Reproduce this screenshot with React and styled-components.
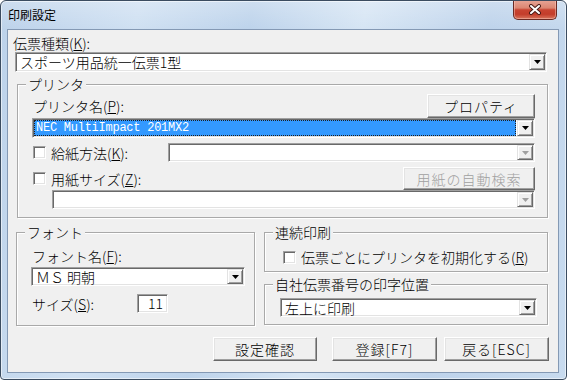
import React from 'react';
import styled, { createGlobalStyle } from 'styled-components';

const GlobalStyle = createGlobalStyle`
  html, body {
    margin: 0;
    padding: 0;
    background: #fff;
  }
  body {
    font-family: "Noto Sans CJK JP", "Noto Sans", sans-serif;
    font-weight: 300;
    color: #000;
  }
  * {
    box-sizing: border-box;
  }
`;

function ArrowIcon({ disabled }) {
  return (
    <svg width="7" height="4" viewBox="0 0 7 4">
      <polygon points="0,0 7,0 3.5,4" fill={disabled ? '#a0a0a0' : '#000'} />
    </svg>
  );
}

function CloseIcon() {
  return (
    <svg width="14" height="11" viewBox="0 0 14 11">
      <path d="M3 2 L11 9 M11 2 L3 9" stroke="#4a1c18" strokeWidth="4" strokeLinecap="round" />
      <path d="M3 2 L11 9 M11 2 L3 9" stroke="#fff" strokeWidth="2" strokeLinecap="round" />
    </svg>
  );
}

function Combo({ w, h, value, disabled, selected, mono, ml }) {
  return (
    <Field $w={w} $h={h} $ml={ml}>
      <Value $selected={selected} $mono={mono}>{value}</Value>
      <DropButton>
        <ArrowIcon disabled={disabled} />
      </DropButton>
    </Field>
  );
}

function Mn({ k }) {
  return <>(<u>{k}</u>):</>;
}

export default function App() {
  return (
    <>
      <GlobalStyle />
      <Window>
        <TitleBar>
          <Title>印刷設定</Title>
          <CloseButton><CloseIcon /></CloseButton>
        </TitleBar>
        <Client>
          <TopLabel>伝票種類<Mn k="K" /></TopLabel>
          <Combo w={532} h={20} ml={7} value="スポーツ用品統一伝票1型" />

          <PrinterGroup>
            <Legend>プリンタ</Legend>
            <Row $h={24}>
              <Label>プリンタ名<Mn k="P" /></Label>
              <Button $w={108} $h={24}>プロパティ</Button>
            </Row>
            <Combo w={503} h={20} selected mono value="NEC MultiImpact 201MX2" />
            <Row $mt={5}>
              <CheckItem>
                <Check />
                <Label>給紙方法<Mn k="K" /></Label>
              </CheckItem>
              <Combo w={367} h={19} disabled value="" />
            </Row>
            <Row $mt={5}>
              <CheckItem>
                <Check />
                <Label>用紙サイズ<Mn k="Z" /></Label>
              </CheckItem>
              <Button $w={132} $h={23} disabled>用紙の自動検索</Button>
            </Row>
            <Combo w={483} h={19} ml={20} disabled value="" />
          </PrinterGroup>

          <BottomRow>
            <FontGroup>
              <Legend>フォント</Legend>
              <Label>フォント名<Mn k="F" /></Label>
              <ComboGap>
                <Combo w={214} h={19} value="ＭＳ 明朝" />
              </ComboGap>
              <SizeRow>
                <SizeLabel>サイズ<Mn k="S" /></SizeLabel>
                <SizeInput>11</SizeInput>
              </SizeRow>
            </FontGroup>
            <RightColumn>
              <ContinuousGroup>
                <Legend>連続印刷</Legend>
                <CheckItem>
                  <Check />
                  <Label>伝票ごとにプリンタを初期化する(<u>R</u>)</Label>
                </CheckItem>
              </ContinuousGroup>
              <PositionGroup>
                <Legend>自社伝票番号の印字位置</Legend>
                <Combo w={257} h={19} value="左上に印刷" />
              </PositionGroup>
            </RightColumn>
          </BottomRow>

          <ButtonBar>
            <Button $w={104} $h={24} $mr={15}>設定確認</Button>
            <Button $w={105} $h={24} $mr={7}>登録[F7]</Button>
            <Button $w={105} $h={24}>戻る[ESC]</Button>
          </ButtonBar>
        </Client>
      </Window>
    </>
  );
}

const Window = styled.div`
  width: 567px;
  height: 380px;
  display: flex;
  flex-direction: column;
  border: 1px solid #3b4c60;
  border-radius: 6px 6px 4px 4px;
  overflow: hidden;
  background:
    linear-gradient(180deg, rgba(255, 255, 255, 0.25) 0%, rgba(255, 255, 255, 0) 28px),
    linear-gradient(100deg, #bcd2ea 0%, #cfe0f2 22%, #bdd3eb 40%, #d6e5f4 58%, #bed3eb 78%, #c8dbef 100%);
  box-shadow: inset 0 0 0 1px rgba(255, 255, 255, 0.55);
`;

const TitleBar = styled.div`
  height: 28px;
  display: flex;
  align-items: flex-start;
  justify-content: space-between;
  padding-left: 7px;
`;

const Title = styled.div`
  font-size: 12px;
  line-height: 16px;
  margin-top: 6px;
  font-weight: 400;
`;

const CloseButton = styled.div`
  width: 44px;
  height: 20px;
  margin-top: -1px;
  margin-right: 9px;
  display: flex;
  align-items: center;
  justify-content: center;
  border: 1px solid #6a2a24;
  border-top: none;
  border-radius: 0 0 5px 5px;
  background: linear-gradient(180deg, #e7a697 0%, #db8672 42%, #c84431 52%, #c33d2b 75%, #d8745d 100%);
  box-shadow: inset 0 0 0 1px rgba(255, 210, 200, 0.45);
`;

const Client = styled.div`
  flex: 1;
  margin: 0 7px 6px 6px;
  background: #f0f0f0;
  border: 1px solid #8499b4;
  display: flex;
  flex-direction: column;
`;

const TopLabel = styled.div`
  margin: 5px 0 1px 5px;
  height: 16px;
  font-size: 14px;
  line-height: 16px;
`;

const Field = styled.div`
  width: ${p => p.$w}px;
  height: ${p => p.$h}px;
  margin-left: ${p => p.$ml || 0}px;
  flex-shrink: 0;
  display: flex;
  padding: 1px;
  background: #fff;
  border-style: solid;
  border-width: 1px;
  border-color: #a0a0a0 #fff #fff #a0a0a0;
  box-shadow: inset 1px 1px 0 #696969, inset -1px -1px 0 #e3e3e3;
`;

const Value = styled.div`
  flex: 1;
  display: flex;
  align-items: center;
  margin-right: ${p => (p.$selected ? 1 : 0)}px;
  padding-left: ${p => (p.$selected ? 1 : 2)}px;
  font-size: ${p => (p.$mono ? 12 : 14)}px;
  line-height: 14px;
  font-family: ${p => (p.$mono ? '"Liberation Mono", monospace' : 'inherit')};
  font-weight: ${p => (p.$mono ? 400 : 300)};
  letter-spacing: ${p => (p.$mono ? '-0.25px' : '0')};
  color: ${p => (p.$selected ? '#fff' : '#000')};
  background: ${p => (p.$selected ? '#3399ff' : 'transparent')};
  border: 1px ${p => (p.$selected ? 'dotted #1e1e1e' : 'solid transparent')};
  white-space: nowrap;
`;

const DropButton = styled.div`
  width: 16px;
  display: flex;
  align-items: center;
  justify-content: center;
  background: #f0f0f0;
  border-style: solid;
  border-width: 1px;
  border-color: #e3e3e3 #696969 #696969 #e3e3e3;
  box-shadow: inset 1px 1px 0 #fff, inset -1px -1px 0 #a0a0a0;
`;

const Group = styled.div`
  position: relative;
  border: 1px solid #a9a9a9;
  box-shadow: inset 1px 1px 0 #fff, 1px 1px 0 #fff;
`;

const PrinterGroup = styled(Group)`
  width: 531px;
  height: 134px;
  margin: 12px 0 0 9px;
  padding: 9px 12px 0 14px;
  display: flex;
  flex-direction: column;
`;

const Legend = styled.div`
  position: absolute;
  top: -9px;
  left: 8px;
  padding: 0 2px;
  background: #f0f0f0;
  font-size: 14px;
  line-height: 16px;
`;

const Row = styled.div`
  display: flex;
  align-items: center;
  justify-content: space-between;
  height: ${p => (p.$h ? `${p.$h}px` : 'auto')};
  margin-top: ${p => p.$mt || 0}px;
`;

const Label = styled.div`
  font-size: 14px;
  line-height: 16px;
  margin-left: 1px;
  white-space: nowrap;
`;

const CheckItem = styled.div`
  display: flex;
  align-items: center;
  gap: 4px;
  margin-left: 1px;
`;

const Check = styled.div`
  width: 13px;
  height: 13px;
  background: #fff;
  border-style: solid;
  border-width: 1px;
  border-color: #a0a0a0 #fff #fff #a0a0a0;
  box-shadow: inset 1px 1px 0 #696969, inset -1px -1px 0 #e3e3e3;
`;

const Button = styled.div`
  width: ${p => p.$w}px;
  height: ${p => p.$h}px;
  margin-right: ${p => p.$mr || 0}px;
  display: flex;
  align-items: center;
  justify-content: center;
  background: #f0f0f0;
  border-style: solid;
  border-width: 1px;
  border-color: #fff #696969 #696969 #fff;
  box-shadow: inset -1px -1px 0 #a0a0a0, inset 1px 1px 0 #e3e3e3;
  font-size: 14px;
  line-height: 16px;
  letter-spacing: 1px;
  color: ${p => (p.disabled ? '#a0a0a0' : '#000')};
`;

const BottomRow = styled.div`
  display: flex;
  gap: 9px;
  margin: 14px 0 0 8px;
`;

const FontGroup = styled(Group)`
  width: 239px;
  height: 94px;
  padding: 15px 0 0 14px;
`;

const ComboGap = styled.div`
  margin-top: 3px;
`;

const SizeRow = styled.div`
  display: flex;
  align-items: center;
  margin-top: 8px;
`;

const SizeLabel = styled(Label)`
  width: 105px;
`;

const SizeInput = styled.div`
  width: 31px;
  height: 19px;
  padding-right: 4px;
  text-align: right;
  font-size: 14px;
  line-height: 16px;
  background: #fff;
  border-style: solid;
  border-width: 1px;
  border-color: #a0a0a0 #fff #fff #a0a0a0;
  box-shadow: inset 1px 1px 0 #696969, inset -1px -1px 0 #e3e3e3;
`;

const RightColumn = styled.div`
  width: 284px;
  display: flex;
  flex-direction: column;
  gap: 12px;
`;

const ContinuousGroup = styled(Group)`
  height: 40px;
  padding: 16px 0 0 17px;
`;

const PositionGroup = styled(Group)`
  height: 41px;
  padding: 13px 0 0 15px;
`;

const ButtonBar = styled.div`
  display: flex;
  justify-content: flex-end;
  margin-top: 11px;
  padding-right: 9px;
`;
